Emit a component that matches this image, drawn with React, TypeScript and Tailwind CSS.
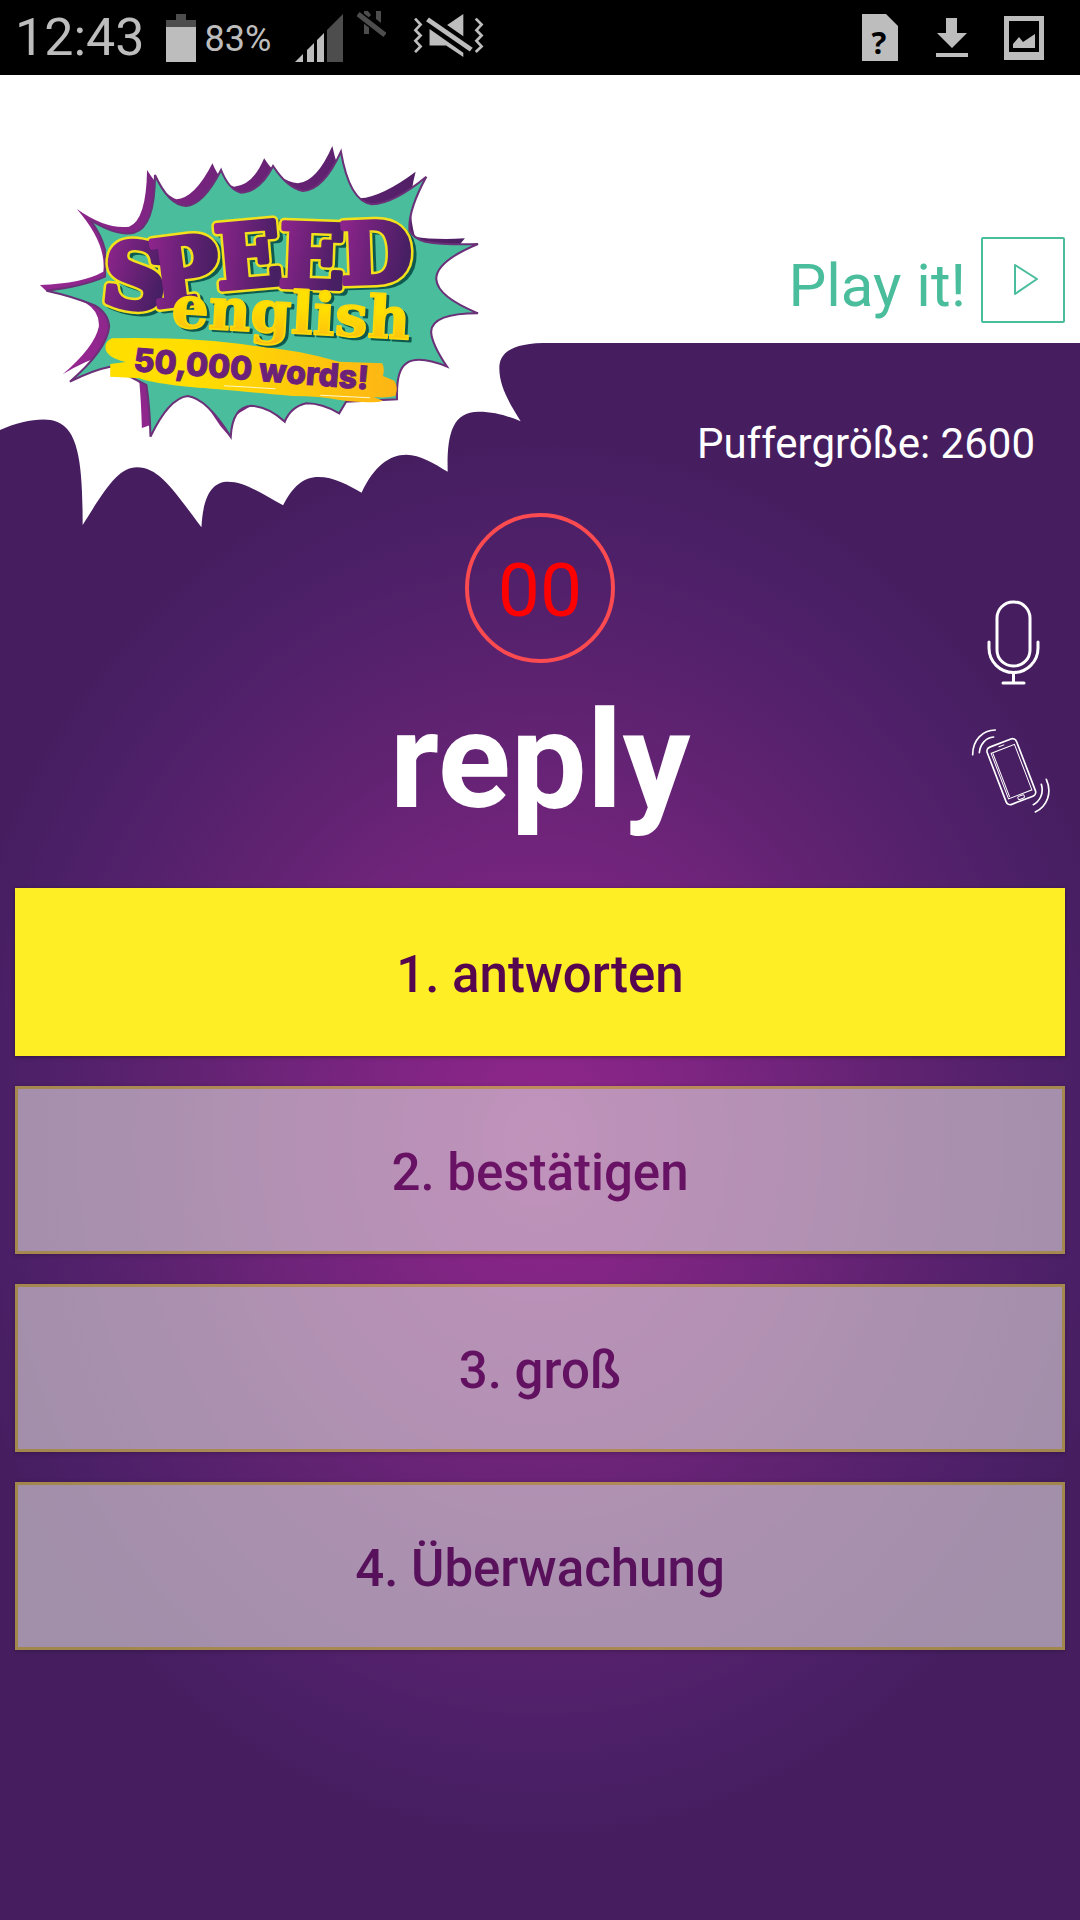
import React from 'react';

function StatusBar() {
  return (
    <div className="flex h-[75px] items-center justify-between bg-black pl-[15px] pr-9 text-[#bdbdbd]">
      <div className="flex items-center">
        <time className="text-[52px] leading-[75px]">12:43</time>
        <svg className="ml-[21px] h-12 w-[30px]" viewBox="0 0 30 48" aria-label="Battery">
          <path d="M10 0h10v6h10v7H0V6h10z" fill="#4d4d4d" />
          <rect y="13" width="30" height="35" fill="#bdbdbd" />
        </svg>
        <span className="ml-[9px] pt-1 text-[36px] leading-[71px]">83%</span>
        <svg className="ml-6 h-12 w-12" viewBox="0 0 48 48" aria-label="Signal">
          <path d="M0 48L8 40V48zM12 36L19 29V48H12zM22 26L29 19V48H22z" fill="#bdbdbd" />
          <path d="M32 16L48 0V48H32z" fill="#4d4d4d" />
        </svg>
        <svg className="mb-7 ml-[14px] h-[26px] w-[29px]" viewBox="0 0 29 26" aria-label="No network">
          <path d="M7 0h4l3 4l-2 2V23H7zM19 0h5v12l-5-4z" fill="#4d4d4d" />
          <path d="M1 3L28 24" stroke="#000" strokeWidth="8" />
          <path d="M1 3L28 24" stroke="#4d4d4d" strokeWidth="5" />
        </svg>
        <svg className="mb-1 ml-[27px] h-[45px] w-[71px]" viewBox="1198 40 206 136" preserveAspectRatio="none" aria-label="Muted">
          <path d="M1246 88L1344 160V173L1294 138H1246zM1297 76L1344 43V110z" fill="#bdbdbd" />
          <path d="M1240 59L1367 151" stroke="#bdbdbd" strokeWidth="14" />
          <path
            d="M1204 57L1220 75L1205 92L1220 108L1205 124L1220 141L1204 158M1380 57L1397 75L1382 92L1397 108L1382 124L1397 141L1380 158"
            fill="none"
            stroke="#bdbdbd"
            strokeWidth="8"
          />
        </svg>
      </div>
      <div className="flex items-center">
        <svg className="h-[47px] w-9 overflow-visible" viewBox="0 0 36 47" aria-label="Unknown file">
          <path d="M0 0H24L36 12V47H0z" fill="#bdbdbd" />
          <text x="17" y="40" textAnchor="middle" fontFamily="Noto Sans" fontWeight="700" fontSize="31" fill="#000">
            ?
          </text>
        </svg>
        <svg className="ml-[38px] h-[39px] w-8" viewBox="0 0 32 39" aria-label="Download">
          <path d="M10 0h11v15h10L16 30L1 15h9zM0 35h32v4H0z" fill="#bdbdbd" />
        </svg>
        <svg className="ml-9 h-11 w-10" viewBox="0 0 40 44" aria-label="Screenshot">
          <path d="M0 0H40V44H0zM5 5V36H35V5z" fillRule="evenodd" fill="#bdbdbd" />
          <path d="M9 28L15 21L19 26L31 18V32H9z" fill="#bdbdbd" />
        </svg>
      </div>
    </div>
  );
}

const speedLetters = [
  { ch: 'S', x: 132, y: 307, r: 6, s: 88 },
  { ch: 'P', x: 189, y: 303, r: -7, s: 90 },
  { ch: 'E', x: 251, y: 286, r: -5, s: 86 },
  { ch: 'E', x: 311, y: 287, r: 2, s: 86 },
  { ch: 'D', x: 377, y: 282, r: -2, s: 82 },
];

function Logo() {
  return (
    <svg
      className="pointer-events-none absolute left-0 top-0 h-[465px] w-[560px]"
      viewBox="0 75 560 465"
      role="img"
      aria-label="Speed English, 50,000 words!"
    >
      <defs>
        <linearGradient id="shade" x1="0" x2="1" y1="0.3" y2="0">
          <stop offset="0" stopColor="#93278f" />
          <stop offset="1" stopColor="#461e60" />
        </linearGradient>
        <linearGradient id="letter" x1="0" x2="1" y1="0" y2="0.3">
          <stop offset="0.1" stopColor="#8c248b" />
          <stop offset="1" stopColor="#471f63" />
        </linearGradient>
        <linearGradient id="band" x1="0" x2="1">
          <stop offset="0.3" stopColor="#ffde00" />
          <stop offset="1" stopColor="#fdb515" />
        </linearGradient>
        <linearGradient id="gold" x1="0" x2="0" y1="0" y2="1">
          <stop offset="0.4" stopColor="#ffe000" />
          <stop offset="1" stopColor="#fdb515" />
        </linearGradient>
      </defs>
      <g transform="translate(0 120) scale(0.34436 0.33333)">
        <path
          fill="#fff"
          d="M0 930C60 902 130 890 165 905C230 930 240 1040 240 1215C310 1100 345 1042 398 1042C465 1042 510 1120 585 1222C590 1120 620 1085 662 1085C710 1085 760 1120 822 1156C850 1100 880 1071 925 1071C970 1071 1010 1095 1050 1118C1085 1040 1130 1004 1180 1004C1220 1004 1260 1030 1300 1055C1298 950 1310 875 1390 875C1440 875 1480 890 1512 904C1480 850 1450 800 1450 745C1450 700 1480 668 1600 668V0H0z"
        />
        <path
          fill="url(#shade)"
          d="M427 150Q470 220 512 238Q565 235 617 130Q640 190 680 200Q735 195 767 115Q810 185 865 190Q920 185 965 78Q990 200 1045 235Q1110 230 1207 155Q1180 260 1205 350Q1260 360 1350 355L1330 380L1150 600L660 900L670 954L640 918Q590 840 560 800H435L437 915L412 924Q410 850 405 790L320 700Q250 720 182 763Q275 680 287 620Q290 575 250 550Q200 525 135 514L116 495Q240 490 300 455Q310 370 223 267Q310 330 375 320Q425 300 427 150z"
        />
        <path
          fill="#49bd9c"
          stroke="#6b3078"
          strokeWidth="6"
          d="M450 165Q490 255 540 258Q590 255 642 150Q665 210 700 218Q755 215 793 138Q835 205 880 213Q940 210 990 95Q1015 245 1080 253Q1145 250 1238 170Q1185 270 1189 330Q1200 355 1235 365Q1290 375 1388 372Q1265 425 1267 478Q1270 530 1388 580Q1255 580 1252 635Q1253 670 1298 740Q1215 705 1180 730Q1150 750 1153 838L1005 845L985 880Q935 850 890 850Q845 860 827 905Q780 860 730 857Q675 860 670 950Q600 835 545 828Q490 835 437 950Q435 860 425 795L320 740Q270 750 203 785Q310 690 317 620Q315 580 275 556Q215 530 135 512Q240 500 305 470V390Q295 345 262 300Q340 350 390 338Q450 320 450 165z"
        />
        <path
          fill="url(#band)"
          d="M325 655Q560 650 740 678Q870 690 985 725L1110 730Q1118 745 1112 768L1145 782Q1158 800 1148 828Q1120 835 1085 831L1112 842Q1080 852 985 840Q930 828 850 828Q640 808 560 802Q440 790 405 775L320 770V732L365 726Q305 712 306 680Q308 662 325 655z"
        />
        <path d="M650 797L800 806M930 826L1075 833" stroke="#fff6c8" strokeWidth="3" fill="none" />
      </g>
      <g fontFamily="DejaVu Serif" fontWeight="700" textAnchor="middle" strokeLinejoin="round">
        <g fill="#0f5a50" stroke="#0f5a50" strokeWidth="9">
          {speedLetters.map((l, i) => (
            <text key={i} x={l.x + 4} y={l.y + 3} fontSize={l.s} transform={`rotate(${l.r} ${l.x} ${l.y})`}>
              {l.ch}
            </text>
          ))}
        </g>
        <g fill="#f3e11c" stroke="#f3e11c" strokeWidth="11">
          {speedLetters.map((l, i) => (
            <text key={i} x={l.x} y={l.y} fontSize={l.s} transform={`rotate(${l.r} ${l.x} ${l.y})`}>
              {l.ch}
            </text>
          ))}
        </g>
        <g fill="url(#letter)" stroke="url(#letter)" strokeWidth="6">
          {speedLetters.map((l, i) => (
            <text key={i} x={l.x} y={l.y} fontSize={l.s} transform={`rotate(${l.r} ${l.x} ${l.y})`}>
              {l.ch}
            </text>
          ))}
        </g>
        <text x="293" y="335" fontSize="58" fill="#0f5a50" stroke="#0f5a50" strokeWidth="2" transform="rotate(3 290 333)">
          english
        </text>
        <text x="290" y="333" fontSize="58" fill="url(#gold)" stroke="#fdd80a" strokeWidth="2" transform="rotate(3 290 333)">
          english
        </text>
      </g>
      <text
        x="133"
        y="371"
        fontFamily="Inter"
        fontWeight="800"
        fontSize="32"
        fill="#6c2179"
        stroke="#6c2179"
        strokeWidth="1"
        transform="rotate(4.5 133 371)"
      >
        50,000 words!
      </text>
    </svg>
  );
}

function MicIcon() {
  return (
    <svg className="h-[85px] w-[53px]" viewBox="0 0 53 85" fill="none" stroke="#fff" strokeWidth="3" strokeLinecap="round">
      <rect x="10" y="2" width="33" height="64" rx="16" />
      <path d="M2 42V48A24.500 24.500 0 0 0 51 48V42M26.500 73V83M16 83H37" />
    </svg>
  );
}

function ShakeIcon() {
  return (
    <svg className="h-[87px] w-20" viewBox="60 441 240 261" fill="none" stroke="#fff" strokeWidth="5" strokeLinecap="round">
      <g transform="translate(184 575) rotate(-21)">
        <rect x="-47" y="-92" width="94" height="184" rx="13" />
        <rect x="-37" y="-73" width="75" height="146" strokeWidth="3" />
        <path d="M-32 -70V68M-8 -83H8" strokeWidth="3" />
        <rect x="-10" y="77" width="20" height="10" rx="4" strokeWidth="3" />
      </g>
      <path d="M68 524C68 480 98 450 136 450M88 518C90 494 106 473 131 471M274 613C282 640 270 663 250 674M289 598C307 638 292 678 256 696" />
    </svg>
  );
}

const answers = [
  { text: '1. antworten', correct: true },
  { text: '2. bestätigen', correct: false },
  { text: '3. groß', correct: false },
  { text: '4. Überwachung', correct: false },
];

export default function App() {
  return (
    <div className="flex min-h-screen flex-col font-['Roboto',sans-serif]">
      <StatusBar />
      <main className="flex flex-1 flex-col bg-[#461e60] bg-[radial-gradient(600px_700px_at_50%_1065px,#932a8e_0%,#8a2688_10%,#842585_19%,#6f247a_44%,#5d2270_64%,#4d2068_86%,#461e60_100%)]">
        <header className="relative flex h-[268px] items-end justify-end bg-white pb-5 pr-[15px]">
          <Logo />
          <button className="relative flex items-center gap-[15px] text-[60px] text-[#4abd9c]">
            <span className="pt-3 leading-[74px]">Play it!</span>
            <span className="flex h-[86px] w-[84px] items-center justify-center rounded-xs border-2 border-[#4abd9c]">
              <svg className="ml-1 h-8 w-[26px]" viewBox="0 0 26 32" fill="none" stroke="#4abd9c" strokeWidth="2" strokeLinejoin="round">
                <path d="M3 1V30L25 15z" />
              </svg>
            </span>
          </button>
        </header>

        <p className="mt-[73px] pr-[45px] text-right text-[42px] leading-[56px] text-white">Puffergröße: 2600</p>

        <section className="mt-[41px] grid grid-cols-[1fr_auto_1fr] px-[15px]">
          <div className="col-start-2 flex flex-col items-center">
            <div className="flex size-[150px] items-center justify-center rounded-full border-4 border-[#fb4a50] pt-1 text-[75px] text-[#ff0000]">
              00
            </div>
            <h1 className="mt-[18px] text-[135px] font-bold leading-[160px] text-white">reply</h1>
          </div>
          <div className="mr-[15px] mt-[87px] flex flex-col items-end gap-[42px] justify-self-end">
            <button className="mr-[10px]" aria-label="Voice input">
              <MicIcon />
            </button>
            <button aria-label="Shake">
              <ShakeIcon />
            </button>
          </div>
        </section>

        <div className="mt-[47px] flex flex-col gap-[30px] px-[15px] pb-10">
          {answers.map((a) => (
            <button
              key={a.text}
              className={
                a.correct
                  ? 'h-[168px] bg-[#fdee25] pt-1.5 text-[51px] font-medium text-[#56064f] shadow-[0_1px_4px_rgba(0,0,0,0.4)]'
                  : 'h-[168px] border-3 border-[#e0ce41] bg-[#e0dadb] pt-1.5 text-[51px] font-medium text-[#56064f] opacity-60 shadow-[0_1px_4px_rgba(0,0,0,0.4)]'
              }
            >
              {a.text}
            </button>
          ))}
        </div>
      </main>
    </div>
  );
}
